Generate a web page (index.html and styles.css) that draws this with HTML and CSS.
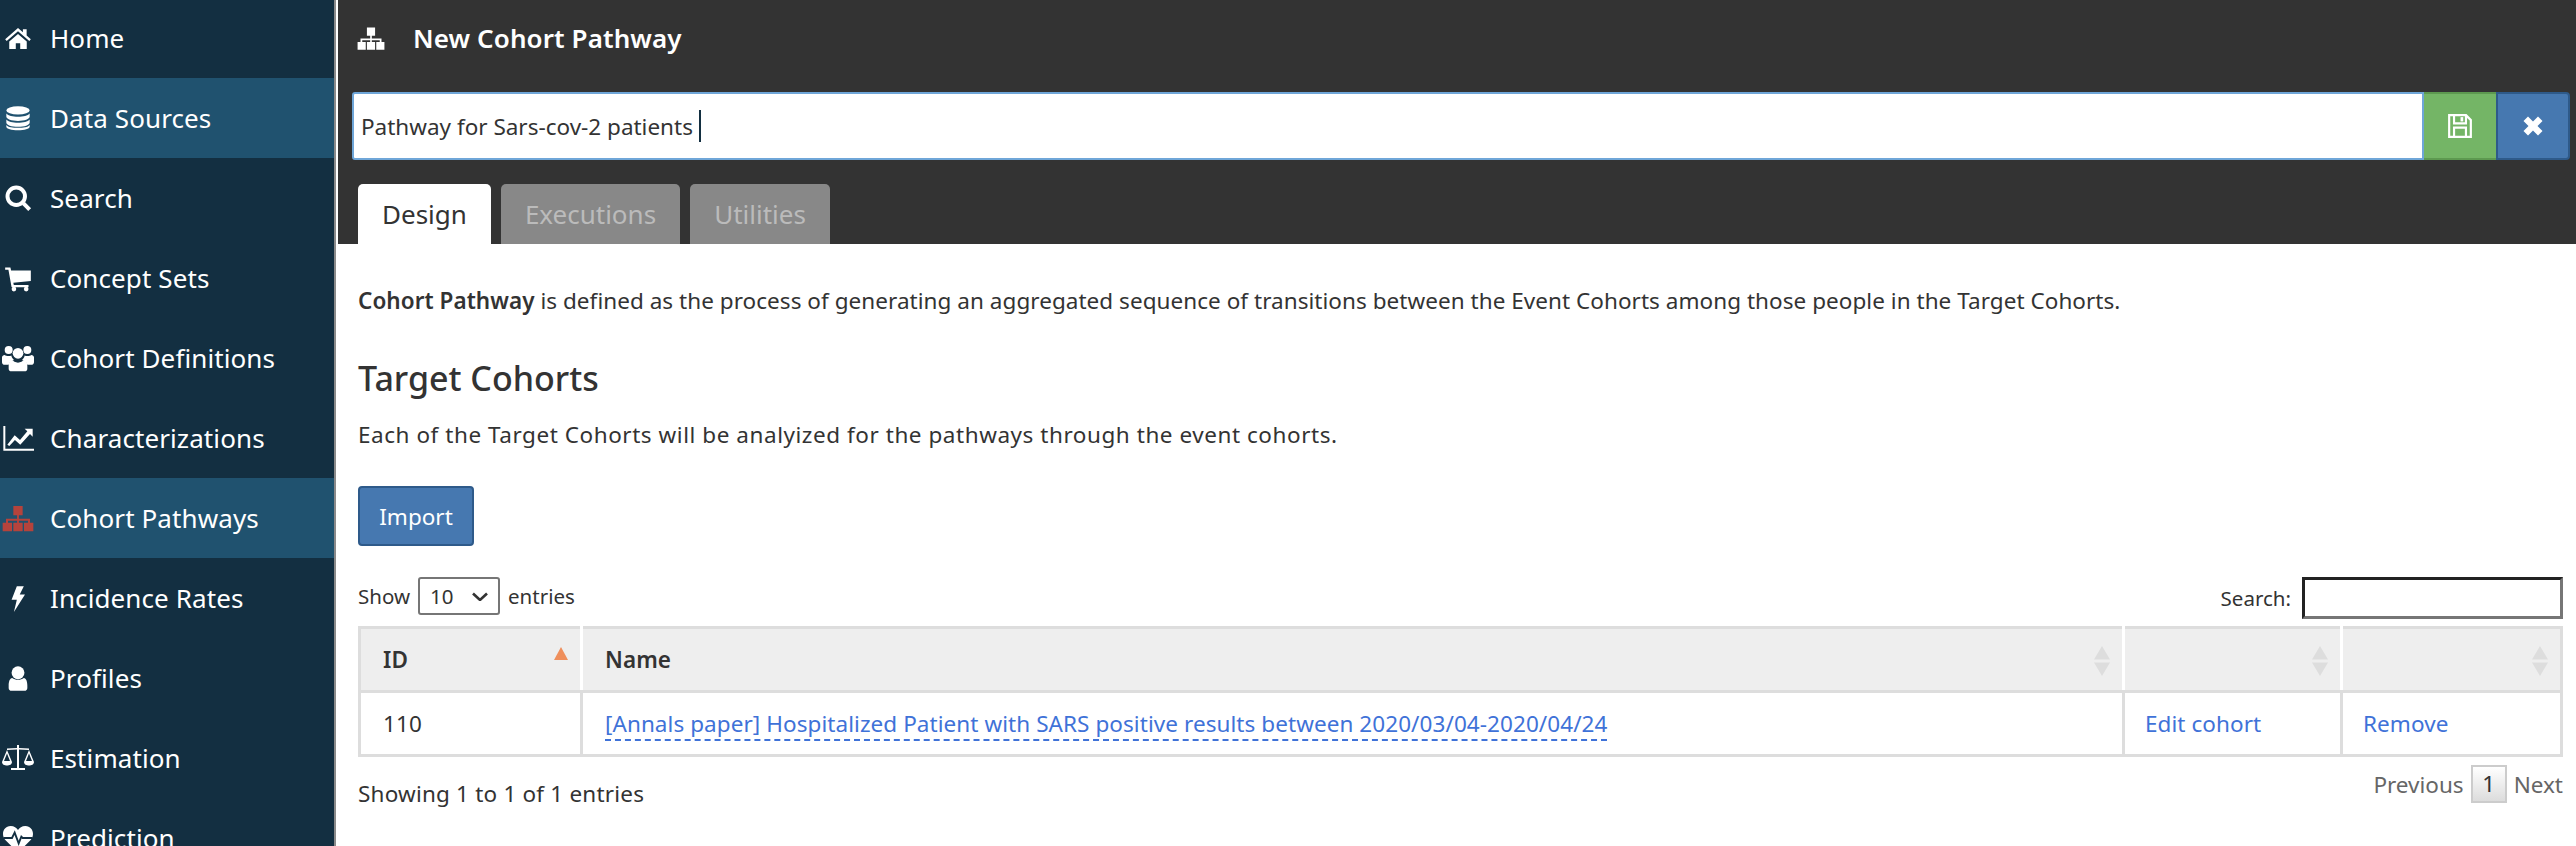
FILE: index.html
```html
<!DOCTYPE html>
<html lang="en">

<head>
    <meta charset="UTF-8">
    <title>New Cohort Pathway</title>
    <link rel="stylesheet" href="styles.css">
</head>

<body>
    <div class="sidebar">
        <div class="nav-item">
            <svg class="nav-icon" viewBox="0 0 24 24"><path d="M12 3.500 1 13l1.300 1.500L12 6.200l9.700 8.300L23 13l-3.600-3.100V4.500h-3.200v2.600z"/><path d="M4.500 15 12 8.600l7.500 6.400v6.500h-5.600v-5h-3.800v5H4.500z"/></svg>
            <span>Home</span>
        </div>
        <div class="nav-item active">
            <svg class="nav-icon" viewBox="0 0 24 24"><ellipse cx="12" cy="5.500" rx="10" ry="3.500"/><path d="M2 8.200c1.500 2 5.500 2.800 10 2.800s8.500-.8 10-2.800V11c0 2-4.500 3.500-10 3.500S2 13 2 11z"/><path d="M2 13.200c1.500 2 5.500 2.800 10 2.800s8.500-.8 10-2.800V16c0 2-4.500 3.500-10 3.500S2 18 2 16z"/><path d="M2 18c1.500 2 5.500 2.400 10 2.400s8.500-.4 10-2.400v1.500c0 1.800-4.500 3-10 3s-10-1.200-10-3z"/></svg>
            <span>Data Sources</span>
        </div>
        <div class="nav-item">
            <svg class="nav-icon" viewBox="0 0 24 24"><circle cx="10.500" cy="10.500" r="7.500" fill="none" stroke="#fff" stroke-width="3.400"/><path d="M15.500 17.800l2.400-2.400 5.300 5.300-2.400 2.400z"/></svg>
            <span>Search</span>
        </div>
        <div class="nav-item">
            <svg class="nav-icon" viewBox="0 0 24 24"><path d="M1 3h4.500l.6 2.500H23v9l-15 1.600.4 1.900H21v2H6.500L3.800 5H1z"/><circle cx="8.500" cy="21.500" r="2"/><circle cx="19" cy="21.500" r="2"/></svg>
            <span>Concept Sets</span>
        </div>
        <div class="nav-item">
            <svg class="nav-icon icon-large" viewBox="0 0 24 24"><circle cx="5" cy="6" r="3"/><circle cx="19" cy="6" r="3"/><circle cx="12" cy="8.500" r="4"/><path d="M0 11.500c0-1 1-1.800 2-1.800 1 1 4 1 5 .4.300 1.500 1 2.500 2 3.400-2 .5-3.500 1.800-4 3.500H1.500C.5 17 0 16 0 15z"/><path d="M24 11.500c0-1-1-1.800-2-1.800-1 1-4 1-5 .4-.3 1.500-1 2.500-2 3.400 2 .5 3.500 1.800 4 3.500h3.500c1 0 1.500-1 1.500-2z"/><path d="M7.500 13.500c1 .6 2.500 2 4.500 2s3.500-1.400 4.500-2c1.500 0 2.500 1.800 2.500 4.500v2c0 1.400-1 2-2 2H7c-1 0-2-.6-2-2v-2c0-2.700 1-4.500 2.500-4.500z"/></svg>
            <span>Cohort Definitions</span>
        </div>
        <div class="nav-item">
            <svg class="nav-icon icon-large" viewBox="0 0 24 24"><path d="M1 3h1.500v17H24v1.500H1z"/><path d="M4 17l5.500-7 4 3.500L19 7l-2-2h6v6l-2-2-7.300 8-4-3.500L5.500 18z"/></svg>
            <span>Characterizations</span>
        </div>
        <div class="nav-item active">
            <svg class="nav-icon icon-red icon-large" viewBox="0 0 24 24"><path d="M8.500 3h7v7h-2.800v2.500H21v3h2.500V22h-7v-6.500h3V14h-6.800v1.500h2.800V22h-7v-6.500h2.800V14H4.500v1.500h3V22h-7v-6.500H3v-3h8.300V10H8.500z"/></svg>
            <span>Cohort Pathways</span>
        </div>
        <div class="nav-item">
            <svg class="nav-icon" viewBox="0 0 24 24"><path d="M11 2h6l-3.500 7H18L8.500 24 11 13.500H6.500z"/></svg>
            <span>Incidence Rates</span>
        </div>
        <div class="nav-item">
            <svg class="nav-icon" viewBox="0 0 24 24"><circle cx="12" cy="7.500" r="5.500"/><path d="M7 12c1.300 1 3 1.500 5 1.500s3.700-.5 5-1.500c2 .3 3 2.800 3 6.500v2c0 1.500-1 2.500-2.500 2.500h-11C5 23 4 22 4 20.500v-2C4 14.800 5 12.300 7 12z"/></svg>
            <span>Profiles</span>
        </div>
        <div class="nav-item">
            <svg class="nav-icon icon-wide" viewBox="0 0 34 28"><path d="M16 1h2v3l10 .5v1.500l-10-.5V24h6v2H10v-2h6V5.500L6 6V4.500L16 4z"/><path d="M6 6 1 18c0 2.500 2.500 3.500 5 3.500s5-1 5-3.500zM6 9.500 9 17H3z" fill-rule="evenodd"/><path d="M28 6 23 18c0 2.500 2.500 3.500 5 3.500s5-1 5-3.500zM28 9.500 31 17h-6z" fill-rule="evenodd"/></svg>
            <span>Estimation</span>
        </div>
        <div class="nav-item">
            <svg class="nav-icon icon-large" viewBox="0 0 24 24"><path d="M12 23 2.500 13.500C-1 9.500 1 3 6.500 3 9 3 11 4.500 12 6c1-1.500 3-3 5.500-3C23 3 25 9.500 21.500 13.500z"/><path d="M1 12h6.500l2-4 3 8 2-5 1 1H23" fill="none" stroke="#132f41" stroke-width="1.400"/></svg>
            <span>Prediction</span>
        </div>
    </div>

    <div class="main">
        <div class="page-header">
            <div class="page-title">
                <svg class="title-icon" viewBox="0 0 24 24"><path d="M8.500 3h7v7h-2.800v2.500H21v3h2.500V22h-7v-6.500h3V14h-6.800v1.500h2.800V22h-7v-6.500h2.800V14H4.500v1.500h3V22h-7v-6.500H3v-3h8.300V10H8.500z"/></svg>
                <span>New Cohort Pathway</span>
            </div>
            <div class="name-row">
                <div class="name-input">Pathway for Sars-cov-2 patients<span class="caret"></span></div>
                <button class="btn-save">
                    <svg viewBox="0 0 24 24"><path d="M1 1h17l5 5v17H1zM3 3v18h2.500v-8.500h13V21H21V7l-2.500-2.500V10.500h-13V3zM7.500 3v5.500h9V3zM7.500 14.500V21h9v-6.500z" fill-rule="evenodd"/><path d="M12.500 3.800h2.500v4h-2.500z"/></svg>
                </button>
                <button class="btn-cancel">
                    <svg viewBox="0 0 24 24"><path d="M7 2.500 12 7.500l5-5L21.500 7l-5 5 5 5-4.500 4.500-5-5-5 5L2.500 17l5-5-5-5z"/></svg>
                </button>
            </div>
            <div class="tabs">
                <div class="tab selected">Design</div>
                <div class="tab">Executions</div>
                <div class="tab">Utilities</div>
            </div>
        </div>

        <div class="content">
            <p class="intro"><b>Cohort Pathway</b> is defined as the process of generating an aggregated sequence of transitions between the Event Cohorts among those people in the Target Cohorts.</p>
            <h2>Target Cohorts</h2>
            <p class="sub">Each of the Target Cohorts will be analyized for the pathways through the event cohorts.</p>
            <button class="btn-import">Import</button>

            <div class="table-top">
                <div class="length">
                    Show
                    <span class="select">10
                        <svg viewBox="0 0 16 10"><path d="M1 2.500 8 9l7-6.500" fill="none" stroke="#333" stroke-width="2.600"/></svg>
                    </span>
                    entries
                </div>
                <div class="search">
                    Search:
                    <span class="search-box"></span>
                </div>
            </div>

            <table class="data-table">
                <thead>
                    <tr>
                        <th class="col-id">ID<span class="sort-up"></span></th>
                        <th class="col-name">Name<span class="sort-both"></span></th>
                        <th class="col-edit"><span class="sort-both"></span></th>
                        <th class="col-remove"><span class="sort-both"></span></th>
                    </tr>
                </thead>
                <tbody>
                    <tr>
                        <td>110</td>
                        <td><a class="dashed" href="#">[Annals paper] Hospitalized Patient with SARS positive results between 2020/03/04-2020/04/24</a></td>
                        <td class="cell-action"><a href="#">Edit cohort</a></td>
                        <td class="cell-action"><a href="#">Remove</a></td>
                    </tr>
                </tbody>
            </table>

            <div class="table-bottom">
                <div class="info">Showing 1 to 1 of 1 entries</div>
                <div class="paging">
                    <span>Previous</span>
                    <span class="page-current">1</span>
                    <span>Next</span>
                </div>
            </div>
        </div>
    </div>
</body>

</html>
```

FILE: styles.css
```css
* {
    margin: 0;
    padding: 0;
    box-sizing: border-box;
}
body {
    display: flex;
    width: 2576px;
    height: 846px;
    overflow: hidden;
    background-color: #fff;
    font-family: "Noto Sans", sans-serif;
    font-size: 22.5px;
    color: #333;
}
.sidebar {
    width: 336px;
    height: 846px;
    flex-shrink: 0;
    background-color: #132f41;
    border-right: 2px solid #8a8a8a;
    overflow: hidden;
}
.nav-item {
    display: flex;
    align-items: center;
    height: 80px;
    gap: 18px;
    padding-left: 4px;
    color: #fff;
    font-size: 26px;
    letter-spacing: 0.1px;
}
.nav-item:first-child {
    margin-top: -2px;
}
.nav-item.active {
    background-color: #20526f;
}
.nav-icon {
    width: 28px;
    height: 28px;
    flex-shrink: 0;
    fill: #fff;
}
.nav-icon.icon-red {
    fill: #b5433c;
}
.nav-icon.icon-large {
    width: 32px;
    height: 32px;
    margin: 0 -2px;
}
.nav-icon.icon-wide {
    width: 34px;
    margin: 0 -3px;
}
.main {
    flex: 1;
    margin-left: 2px;
    min-width: 0;
}
.page-header {
    background-color: #333;
    height: 244px;
    padding-left: 14px;
    padding-right: 6px;
}
.page-title {
    display: flex;
    align-items: center;
    height: 92px;
    padding: 0 0 16px 5px;
    gap: 28px;
    color: #fff;
    font-size: 26px;
    font-weight: 600;
    letter-spacing: 0.1px;
}
.title-icon {
    width: 28px;
    height: 28px;
    fill: #fff;
}
.name-row {
    display: flex;
    height: 68px;
}
.name-input {
    flex: 1;
    display: flex;
    align-items: center;
    padding-left: 7px;
    background-color: #fff;
    border: 2px solid #6fa6d8;
    border-radius: 3px 0 0 3px;
}
.caret {
    width: 2px;
    height: 32px;
    margin-left: 6px;
    background-color: #132f41;
}
.btn-save,
.btn-cancel {
    display: flex;
    align-items: center;
    justify-content: center;
    border-style: solid;
}
.btn-save {
    width: 72px;
    background-color: #74b566;
    border-width: 2px 0;
    border-color: #5d9950;
}
.btn-save svg {
    width: 26px;
    height: 26px;
    fill: #fff;
}
.btn-cancel {
    width: 74px;
    background-color: #4678b0;
    border-width: 2px;
    border-color: #2e5a8a;
    border-radius: 0 4px 4px 0;
}
.btn-cancel svg {
    width: 24px;
    height: 24px;
    fill: #fff;
}
.tabs {
    display: flex;
    gap: 10px;
    margin: 24px 0 0 6px;
}
.tab {
    height: 60px;
    padding: 0 24px;
    line-height: 60px;
    background-color: #888;
    color: #bbb;
    border-radius: 5px 5px 0 0;
    font-size: 26px;
}
.tab.selected {
    background-color: #fff;
    color: #333;
}
.content {
    padding: 0 13px 0 20px;
}
.intro {
    margin-top: 43px;
    line-height: 28px;
    letter-spacing: 0.045px;
}
.intro b {
    font-weight: 600;
}
h2 {
    margin-top: 42px;
    font-size: 34px;
    font-weight: 500;
    line-height: 42px;
}
.sub {
    margin-top: 22px;
    line-height: 28px;
    letter-spacing: 0.55px;
}
.btn-import {
    display: block;
    width: 116px;
    height: 60px;
    margin-top: 37px;
    background-color: #4678b0;
    border: 2px solid #2e5a8a;
    border-radius: 4px;
    color: #fff;
    font-family: inherit;
    font-size: 22.5px;
}
.table-top {
    display: flex;
    justify-content: space-between;
    align-items: flex-start;
    height: 49px;
    margin-top: 31px;
    font-size: 20.5px;
}
.length {
    display: flex;
    align-items: center;
    gap: 8px;
    height: 38px;
}
.select {
    display: flex;
    align-items: center;
    justify-content: space-between;
    width: 82px;
    height: 38px;
    padding: 0 10px;
    border: 2px solid #767676;
    border-radius: 3px;
}
.select svg {
    width: 16px;
    height: 10px;
}
.search {
    display: flex;
    align-items: center;
    gap: 11px;
    height: 42px;
}
.search-box {
    display: block;
    width: 261px;
    height: 42px;
    border-style: solid;
    border-width: 3px;
    border-color: #222 #767676 #767676 #222;
}
.data-table {
    width: 2205px;
    height: 131px;
    border-collapse: collapse;
    table-layout: fixed;
    border: 3px solid #ddd;
    letter-spacing: 0.07px;
}
.data-table th,
.data-table td {
    position: relative;
    padding: 0 22px;
    text-align: left;
    border: 3px solid #ddd;
}
.data-table td.cell-action {
    padding: 0 20px;
}
.data-table th {
    height: 64px;
    background-color: #eee;
    border-left-color: #fff;
    border-right-color: #fff;
    font-weight: 600;
}
.data-table th:first-child {
    border-left-color: #ddd;
}
.data-table th:last-child {
    border-right-color: #ddd;
}
.data-table a {
    color: #3f72d8;
    text-decoration: none;
}
.data-table a.dashed {
    border-bottom: 2px dashed #3f72d8;
}
.col-id {
    width: 222px;
}
.col-name {
    width: 1542px;
}
.col-edit {
    width: 218px;
}
.sort-up {
    position: absolute;
    top: 18px;
    right: 12px;
    border-left: 7px solid transparent;
    border-right: 7px solid transparent;
    border-bottom: 13px solid #ef8f5c;
}
.sort-both {
    position: absolute;
    top: 17px;
    right: 12px;
    width: 16px;
    height: 30px;
    background-color: #ddd;
    clip-path: polygon(50% 0, 100% 45%, 0 45%, 0 55%, 100% 55%, 50% 100%, 0 55%, 0 45%);
}
.table-bottom {
    display: flex;
    justify-content: space-between;
    align-items: flex-start;
    margin-top: 8px;
}
.info {
    margin-top: 13px;
    letter-spacing: 0.2px;
}
.paging {
    display: flex;
    align-items: center;
    gap: 7px;
    color: #666;
}
.page-current {
    width: 36px;
    height: 38px;
    line-height: 34px;
    text-align: center;
    color: #333;
    background-image: linear-gradient(#fff, #dcdcdc);
    border: 2px solid #ccc;
}
```
